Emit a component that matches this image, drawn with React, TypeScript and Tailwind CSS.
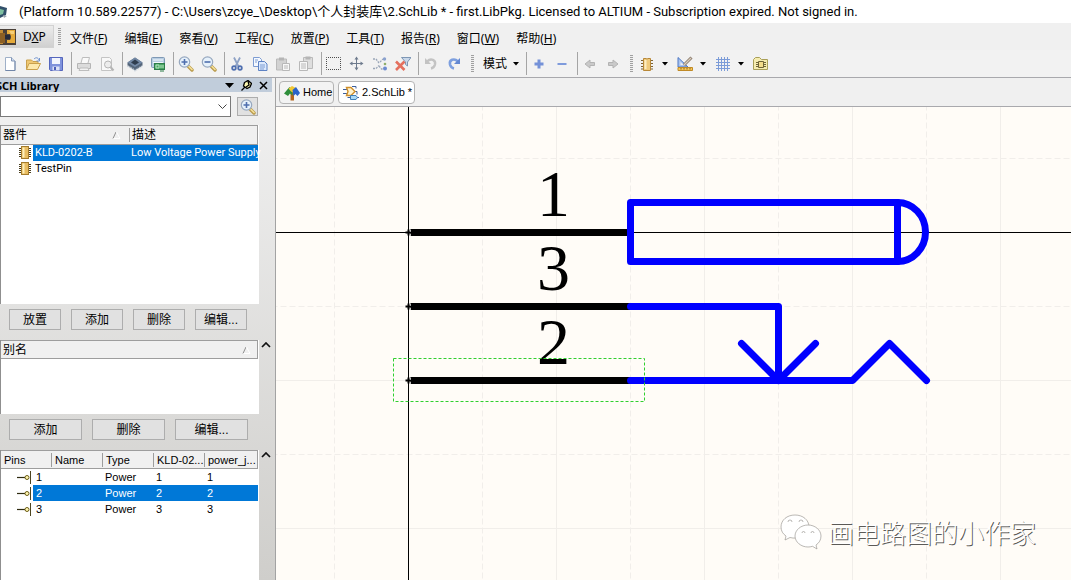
import type { ReactNode } from "react";

const UI_FONT = "font-['Noto_Sans','Noto_Sans_CJK_SC',sans-serif]";
const LIST_FONT = "font-['Liberation_Sans','Noto_Sans_CJK_SC',sans-serif]";
const NARROW_FONT = "font-['Roboto','Noto_Sans_CJK_SC',sans-serif]";

const MENUS = [
  ["文件", "F"],
  ["编辑", "E"],
  ["察看", "V"],
  ["工程", "C"],
  ["放置", "P"],
  ["工具", "T"],
  ["报告", "R"],
  ["窗口", "W"],
  ["帮助", "H"],
];

const PINS = ["1", "2", "3"];

function Icon({ children }: { children: ReactNode }) {
  return (
    <svg viewBox="0 0 16 16" className="h-4 w-4 shrink-0" fill="none" aria-hidden="true">
      {children}
    </svg>
  );
}

function Caret() {
  return (
    <svg viewBox="0 0 6 4" className="h-1 w-1.5 shrink-0" aria-hidden="true">
      <path d="M0 0h6L3 3.5z" fill="#000" />
    </svg>
  );
}

function Tool({ label, children }: { label: string; children: ReactNode }) {
  return (
    <button type="button" aria-label={label} className="flex h-6 w-[23px] shrink-0 items-center pl-0.5">
      <Icon>{children}</Icon>
    </button>
  );
}

function DropTool({ label, children }: { label: string; children: ReactNode }) {
  return (
    <button type="button" aria-label={label} className="flex h-6 w-[38px] shrink-0 items-center gap-[7px] pl-0.5">
      <Icon>{children}</Icon>
      <Caret />
    </button>
  );
}

function Separator() {
  return (
    <span className="flex h-[23px] w-[5px] shrink-0 justify-center">
      <span className="w-px bg-[#a5a5a5]" />
    </span>
  );
}

function Grip() {
  return (
    <span className="flex w-[11px] shrink-0 justify-center">
      <span className="h-[17px] w-[3px] bg-[repeating-linear-gradient(#a0a0a0_0_1px,#f0f0f0_1px_2px)]" />
    </span>
  );
}

function Lens({ plus }: { plus: boolean }) {
  return (
    <>
      <path d="M10.500 10.500l3.500 3.500" stroke="#b99a4c" strokeWidth="3.400" strokeLinecap="round" />
      <path d="M11 10.500l3 3" stroke="#f6e29a" strokeWidth="1.600" strokeLinecap="round" />
      <circle cx="6.5" cy="6" r="5.2" fill="#e6f1fb" stroke="#97a8bf" strokeWidth="1.2" />
      <path d={plus ? "M3.5 6h6M6.5 3v6" : "M3.5 6h6"} stroke="#4f6fae" strokeWidth="1.6" />
    </>
  );
}

function Chip() {
  return (
    <svg viewBox="0 0 12 14" className="h-[14px] w-3 shrink-0" aria-hidden="true">
      <path d="M0 2.5h12M0 4.5h12M0 6.5h12M0 8.5h12M0 10.5h12" stroke="#4b3f20" />
      <rect x="2.500" y=".5" width="7" height="12" fill="#e9bd62" stroke="#a57c2c" />
      <path d="M4.500 1.500v10" stroke="#fdeebb" strokeWidth="2" />
    </svg>
  );
}

function PinMark() {
  return (
    <svg viewBox="0 0 15 14" className="h-[14px] w-[15px] shrink-0" fill="none" aria-hidden="true">
      <path d="M1 7.5h8" stroke="#2f2b10" strokeWidth="1.2" />
      <circle cx="11" cy="7.5" r="2" fill="#fff6b0" stroke="#6b5c17" />
      <path d="M14.5 1v13" stroke="#4d4520" />
    </svg>
  );
}

function SortMark() {
  return (
    <svg viewBox="0 0 9 8" className="h-2 w-[9px] shrink-0" fill="none" aria-hidden="true">
      <path d="M1 7.5L4 1" stroke="#8f8f8f" />
      <path d="M4.5 1L8 7.5H1.5" stroke="#fff" />
    </svg>
  );
}

function Chevron() {
  return (
    <svg viewBox="0 0 10 6" className="h-1.5 w-2.5 shrink-0" fill="none" aria-hidden="true">
      <path d="M1 5l4-4 4 4" stroke="#111" strokeWidth="1.7" />
    </svg>
  );
}

function PanelButton({ children, wide = false }: { children: ReactNode; wide?: boolean }) {
  return (
    <button
      type="button"
      className={`h-[21px] shrink-0 border border-[#adadad] bg-[#e1e1e1] text-xs leading-none text-black ${wide ? "w-[73px]" : "w-[52px]"}`}
    >
      {children}
    </button>
  );
}

function MenuBar() {
  return (
    <nav className="flex h-[27px] items-center bg-[#f0f0f0]">
      <button
        type="button"
        className="flex h-[23px] w-[54px] shrink-0 items-center gap-[7px] border border-l-0 border-[#d2d2d2] bg-gradient-to-b from-[#ececec] to-[#d0d0d0] text-xs"
      >
        <svg viewBox="0 0 16 16" className="h-4 w-4" aria-hidden="true">
          <rect width="16" height="16" fill="#4a4038" />
          <path d="M0 1h3v14H0z" fill="#c08a35" />
          <path d="M0 4h5v3h2v3H5v4H0z" fill="#8b5f24" />
          <path d="M7 1h8v13H7v-3h3q2-3 0-6H7z" fill="#e5aa3a" />
          <path d="M9 2h5v3h-3z" fill="#f6cf78" />
          <path d="M5 6h5v4H5z" fill="#262a3a" />
        </svg>
        <span>
          D<u>X</u>P
        </span>
      </button>
      <Grip />
      <ul className="flex items-center gap-[17px] pl-[5px]">
        {MENUS.map(([name, key]) => (
          <li key={key}>
            <button type="button" className="whitespace-nowrap text-xs">
              {name}(<u>{key}</u>)
            </button>
          </li>
        ))}
      </ul>
    </nav>
  );
}

function Toolbar() {
  return (
    <div role="toolbar" className="flex h-[28px] items-center border-b border-[#a9a9ad] bg-[#f2f2f2]">
      <Tool label="New">
        <path d="M3.5 1.500h6l3.500 3.500v9.500H3.500z" fill="#fff" stroke="#9fb0c8" />
        <path d="M13 5v9.500H3.500" stroke="#7186a8" />
        <path d="M9.5 1.500v3.500H13" stroke="#8497b5" fill="#cfdcf0" />
      </Tool>
      <Tool label="Open">
        <path d="M1.500 13.500v-9.500h5l1.500 1.500h5V8" fill="#efc873" stroke="#c9a04c" />
        <path d="M1.500 13.500L4 7.500h11.500l-3 6z" fill="#fde9ad" stroke="#c9a04c" />
        <path d="M9 3c2-2 4-1.500 5 1M14.500 2v3h-3" stroke="#6f92cf" />
      </Tool>
      <Tool label="Save">
        <path d="M1.500 1.500h13v13h-12l-1-1z" fill="#7f93dc" stroke="#5566bd" />
        <path d="M4 2h8v6H4z" fill="#f2f5fd" />
        <path d="M4.500 10.500h7v4h-7z" fill="#dce2f6" />
        <path d="M6 11h2v3H6z" fill="#4a5cb5" />
      </Tool>
      <Separator />
      <Tool label="Print">
        <path d="M5 7l1.500-5.500h7L12 7" fill="#fafafa" stroke="#bdbdbd" />
        <path d="M1.500 7.500h13v5h-13z" fill="#dcdcdc" stroke="#b5b5b5" />
        <path d="M4 12h8l1 2.500H3z" fill="#f3f3f3" stroke="#bdbdbd" />
      </Tool>
      <Tool label="Print preview">
        <path d="M2.500 1.500h8l2 2v11h-10z" fill="#f8f8f8" stroke="#c4c4c4" />
        <circle cx="9" cy="8.500" r="3.500" fill="#ececec" stroke="#b5b5b5" />
        <path d="M11.500 11l3 3.500" stroke="#b5b5b5" strokeWidth="2" />
      </Tool>
      <Separator />
      <Tool label="Components">
        <path d="M.500 6.500L8 1.500l7.500 5v3L8 14.500l-7.500-5z" fill="#54657a" />
        <path d="M.500 6.500L8 1.500l7.500 5L8 11z" fill="#7389a6" />
        <path d="M4 6.500L8 3.500l4 3L8 9z" fill="#2f3d4f" />
        <path d="M.500 10L8 14.500l7.500-4.500" stroke="#c7d0da" strokeWidth="1.800" strokeDasharray="1 1" />
      </Tool>
      <Tool label="Board">
        <rect x="1.500" y="1.500" width="13" height="10" rx="1" fill="#b8cde2" stroke="#7f99b5" />
        <path d="M3 4h10M3 6.500h10" stroke="#f3f8fc" />
        <rect x="4.500" y="7.500" width="10" height="6" fill="#4aa565" stroke="#2c7c49" />
        <path d="M6 9h3v3H6zM11 9v3M13 9v3" stroke="#b5e6bf" />
        <path d="M10 15h4" stroke="#2c7c49" />
      </Tool>
      <Separator />
      <Tool label="Zoom in">
        <Lens plus />
      </Tool>
      <Tool label="Zoom out">
        <Lens plus={false} />
      </Tool>
      <Separator />
      <Tool label="Cut">
        <path d="M5 1.500l4.500 9M11 1.500L6.500 10.500" stroke="#8fa3c6" strokeWidth="1.800" />
        <circle cx="5" cy="12" r="1.800" stroke="#4f6fb0" strokeWidth="1.800" />
        <circle cx="11" cy="12" r="1.800" stroke="#4f6fb0" strokeWidth="1.800" />
      </Tool>
      <Tool label="Copy">
        <path d="M1.500 1.500h6l2 2v7h-8z" fill="#f5f9ff" stroke="#7d9cd2" />
        <path d="M6.500 5.500h6l2.500 2.500v6.500H6.500z" fill="#dce9fd" stroke="#5d82c4" />
        <path d="M8 9h5M8 11h5M8 13h4M3 4h3M3 6h2" stroke="#7d9cd2" />
      </Tool>
      <Tool label="Paste">
        <path d="M1.500 3h10v11h-10z" fill="#d2d2d2" stroke="#bababa" />
        <path d="M4 1.500h5v3H4z" fill="#b5b5b5" />
        <path d="M7.500 7.500h7v7h-7zM9 10h4M9 12h4" fill="#f7f7f7" stroke="#b8b8b8" />
      </Tool>
      <Tool label="Paste special">
        <path d="M5.500 1.500h9v11h-9z" fill="#dedede" stroke="#bababa" />
        <path d="M7.500 .500h5v3h-5z" fill="#b5b5b5" />
        <path d="M1.500 5.500h8v9h-8zM3 8h5M3 10h5M3 12h5" fill="#f7f7f7" stroke="#b8b8b8" />
      </Tool>
      <Separator />
      <Tool label="Select area">
        <rect x=".5" y="1.500" width="14" height="12" stroke="#4c4c4c" strokeDasharray="1 1" strokeDashoffset=".5" />
      </Tool>
      <Tool label="Move">
        <path d="M7.500 2v11M2 7.500h11" stroke="#6e7b8d" />
        <path d="M7.500 .500l2 3h-4zM7.500 14.500l2-3h-4zM.500 7.500l3-2v4zM14.500 7.500l-3-2v4z" fill="#6e7b8d" />
      </Tool>
      <Tool label="Deselect">
        <path d="M1 3h3l3 4M1 12.500h3l3-3M7 10l2.500 3h2M8 6l3-3" stroke="#9aa6b8" strokeWidth="1.300" strokeDasharray="2 1" />
        <circle cx="12.500" cy="3" r="1.700" fill="#8ba2cf" />
        <circle cx="13" cy="8" r="1.300" fill="#8fae6b" />
        <circle cx="13" cy="12.500" r="2" fill="#6c8bd0" />
      </Tool>
      <Tool label="Clear filter">
        <path d="M6.500 1.500H16L12.500 6v4l-2-1.500V6z" fill="#c9d8ea" stroke="#7e97b5" />
        <path d="M1 5.500l8.500 8.500M9.500 5.500L1 14" stroke="#e4705f" strokeWidth="2.600" />
      </Tool>
      <Separator />
      <Tool label="Undo">
        <path d="M4 5.500c4-4 9-1.500 8 3-.500 2-2 3.500-4 4" stroke="#c3c3c3" strokeWidth="2.400" />
        <path d="M2 2v6h6z" fill="#c3c3c3" />
      </Tool>
      <Tool label="Redo">
        <path d="M12 5.500c-4-4-9-1.500-8 3 .500 2 2 3.500 4 4" stroke="#7d9fdf" strokeWidth="2.600" />
        <path d="M14 2v6H8z" fill="#6388d2" />
      </Tool>
      <Grip />
      <button type="button" className="flex w-[46px] shrink-0 items-center justify-center gap-1.5 whitespace-nowrap text-xs">
        模式
        <Caret />
      </button>
      <Separator />
      <Tool label="Add">
        <path d="M8 3.500v9M3.500 8h9" stroke="#7491d8" strokeWidth="3" />
      </Tool>
      <Tool label="Remove">
        <path d="M3.500 8h9" stroke="#7f9bdc" strokeWidth="2" />
      </Tool>
      <Separator />
      <Tool label="Previous">
        <path d="M3 8l5-4v2.500h4.500v3H8V12z" fill="#c9c9c9" stroke="#b3b3b3" />
      </Tool>
      <Tool label="Next">
        <path d="M13 8L8 4v2.500H3.500v3H8V12z" fill="#c9c9c9" stroke="#b3b3b3" />
      </Tool>
      <Grip />
      <DropTool label="Place component">
        <path d="M2 4.500h12M2 7.500h12M2 10.500h12M2 13h12" stroke="#7d6434" />
        <path d="M4.500 2.500h2.500q1 1.200 2 0h2.500v12h-7z" fill="#f0cb7d" stroke="#b88838" />
        <path d="M6.500 4v9" stroke="#fdedc2" strokeWidth="2" />
      </DropTool>
      <DropTool label="Drawing tools">
        <path d="M1 1.500v9.500h10z" fill="#a9c4f0" stroke="#4c77c4" />
        <path d="M3.500 6v3h3z" fill="#f0f0f0" />
        <path d="M7 9l7.500-7.500" stroke="#8a7a6a" strokeWidth="3" />
        <path d="M7 9l7-7" stroke="#d9cdbd" strokeWidth="1.200" />
        <path d="M1 11.500h14.500v3H1z" fill="#f5c657" stroke="#c08a27" />
        <path d="M4 12v1.500M7 12v1.500M10 12v1.500M13 12v1.500" stroke="#8b621a" />
      </DropTool>
      <DropTool label="Grid">
        <path d="M1 3.500h14M1 6.500h14M1 9.500h14M1 12.500h14M3.500 1v14M6.500 1v14M9.500 1v14M12.500 1v14" stroke="#7c9cd8" />
      </DropTool>
      <button type="button" aria-label="Library" className="flex w-[23px] shrink-0 items-center pl-0.5">
        <Icon>
          <path d="M.500 13.500v-10l2-2h4l2 2h6v10z" fill="#f5ecb0" stroke="#a99f58" />
          <path d="M3 6.500h10M3 8.500h10M3 10.500h10" stroke="#6f6436" />
          <path d="M5.500 5.500h5v6h-5z" fill="#f3dc8a" stroke="#6f6436" />
        </Icon>
      </button>
    </div>
  );
}

function LibraryPanel() {
  return (
    <aside className={`flex w-[276px] shrink-0 flex-col border-r border-[#a3a3a3] bg-gradient-to-b from-[#f2f2f2] to-[#cfcecb] ${LIST_FONT}`}>
      <header className="mr-[3px] flex h-[14px] items-center gap-[7px] overflow-hidden bg-[#c1cddb] pr-1">
        <h2 className={`-ml-1 flex-1 text-[11px] font-bold leading-none ${UI_FONT}`}>SCH Library</h2>
        <svg viewBox="0 0 9 5" className="h-[5px] w-[9px]" aria-hidden="true">
          <path d="M0 0h9L4.500 5z" />
        </svg>
        <svg viewBox="0 0 11 11" className="h-[11px] w-[11px]" aria-hidden="true">
          <path d="M3.500 2.500L7 .500l3.500 3L9 7 6 8.500 2.500 6z" fill="#fbf7b0" stroke="#000" strokeWidth="1.300" />
          <path d="M.500 10.500L4 7M7 1l1 4-3 2" fill="none" stroke="#000" strokeWidth="1.300" />
        </svg>
        <svg viewBox="0 0 9 9" className="h-[9px] w-[9px]" aria-hidden="true">
          <path d="M1 1l7 7M8 1L1 8" stroke="#000" strokeWidth="1.500" />
        </svg>
      </header>

      <div className="mt-1 flex h-[21px] items-center gap-1.5">
        <div className="relative h-[21px] w-[231px]">
          <select aria-label="Filter" className="block h-full w-full appearance-none border border-[#7a7a7a] bg-white text-xs">
            <option value="" />
          </select>
          <svg viewBox="0 0 9 6" className="pointer-events-none absolute top-2 right-1 h-1.5 w-[9px]" fill="none" aria-hidden="true">
            <path d="M.500 .500l4 4 4-4" stroke="#444" />
          </svg>
        </div>
        <button type="button" aria-label="Find" className="flex h-[19px] w-[21px] items-center justify-center border border-[#adadad] bg-[#e1e1e1]">
          <Icon>
            <Lens plus />
          </Icon>
        </button>
      </div>

      <div className="mt-2 h-[179px] w-[259px] border-l border-[#8f8f8f] bg-white pr-px">
        <table className={`w-full table-fixed text-left text-[11px] leading-4 ${NARROW_FONT}`}>
          <colgroup>
            <col className="w-[128px]" />
            <col />
          </colgroup>
          <thead>
            <tr className="h-[19px] border border-l-0 border-[#9d9d9d] bg-[#f0f0f0]">
              <th className="p-0 pl-0.5 text-xs font-normal">
                <span className="flex items-center justify-between pr-2">
                  器件
                  <SortMark />
                </span>
              </th>
              <th className="p-0 text-xs font-normal">
                <span className="block border-l border-[#9d9d9d] pl-0.5 leading-[14px]">描述</span>
              </th>
            </tr>
          </thead>
          <tbody>
            <tr className="h-4 text-white">
              <td className="p-0">
                <span className="flex h-4 items-center gap-0.5 pl-[18px] text-white">
                  <Chip />
                  <span className="flex-1 bg-[#0078d7] pl-0.5">KLD-0202-B</span>
                </span>
              </td>
              <td className="bg-[#0078d7] p-0 pl-0.5 whitespace-nowrap">Low Voltage Power Supply</td>
            </tr>
            <tr className="h-4">
              <td className="p-0">
                <span className="flex h-4 items-center gap-1 pl-[18px]">
                  <Chip />
                  TestPin
                </span>
              </td>
              <td className="p-0" />
            </tr>
          </tbody>
        </table>
      </div>

      <div className="mt-[5px] flex gap-2.5 pl-[9px]">
        <PanelButton>放置</PanelButton>
        <PanelButton>添加</PanelButton>
        <PanelButton>删除</PanelButton>
        <PanelButton>编辑...</PanelButton>
      </div>

      <div className="mt-2.5 flex h-[74px] items-start gap-0.5">
        <div className="h-full w-[259px] border-l border-[#8f8f8f] bg-white pr-px">
          <div className="flex h-[19px] items-center justify-between border border-l-0 border-[#9d9d9d] bg-[#f0f0f0] pr-1.5 pl-0.5 text-xs">
            别名
            <SortMark />
          </div>
        </div>
        <button type="button" aria-label="Collapse aliases" className="pt-0.5">
          <Chevron />
        </button>
      </div>

      <div className="mt-[5px] flex gap-2.5 pl-[9px]">
        <PanelButton wide>添加</PanelButton>
        <PanelButton wide>删除</PanelButton>
        <PanelButton wide>编辑...</PanelButton>
      </div>

      <div className="mt-2.5 flex flex-1 items-stretch gap-0.5">
        <div className="w-[259px] border-l border-[#8f8f8f] bg-white pr-px">
          <table className="w-full table-fixed text-left text-[11px] leading-4">
            <colgroup>
              <col className="w-[50px]" />
              <col className="w-[51px]" />
              <col className="w-[51px]" />
              <col className="w-[51px]" />
              <col />
            </colgroup>
            <thead>
              <tr className="h-[18px] border border-l-0 border-[#9d9d9d] bg-[#f0f0f0]">
                {["Pins", "Name", "Type", "KLD-02...", "power_j..."].map((name, i) => (
                  <th key={name} className="p-0 font-normal whitespace-nowrap">
                    <span className={`block pl-[3px] leading-[14px] ${i ? "border-l border-[#9d9d9d]" : ""}`}>{name}</span>
                  </th>
                ))}
              </tr>
            </thead>
            <tbody>
              {PINS.map((pin) => {
                const cell = pin === "2" ? "bg-[#0078d7] p-0 pl-[3px] text-white" : "p-0 pl-[3px]";
                return (
                  <tr key={pin} className="h-4">
                    <td className="p-0">
                      <span className="flex h-4 items-center gap-0.5 pl-[15px]">
                        <PinMark />
                        <span className={`flex-1 ${cell}`}>{pin}</span>
                      </span>
                    </td>
                    <td className={cell} />
                    <td className={cell}>Power</td>
                    <td className={cell}>{pin}</td>
                    <td className={cell}>{pin}</td>
                  </tr>
                );
              })}
            </tbody>
          </table>
        </div>
        <button type="button" aria-label="Collapse pins" className="flex items-start pt-0.5">
          <Chevron />
        </button>
      </div>
    </aside>
  );
}

function Tabs() {
  return (
    <div className={`flex h-[29px] items-start gap-1 border-b border-[#a9a9ad] bg-[#f0f0f0] pt-[3px] pl-[3px] text-[11px] ${LIST_FONT}`}>
      <button type="button" className="flex h-[23px] w-[55px] items-center gap-[3px] rounded-sm border border-[#b4b4b4] bg-[#f3f3f3] pl-1">
        <Icon>
          <path d="M6.500 7h3.500v8.500H6.500z" fill="#b5651d" />
          <path d="M0 8.500L5.500 2l3 3v5.500L6 8.500l-2 2.500z" fill="#2f8f3c" />
          <path d="M4.500 3.500L8 1l4 2-3 4.500-2-1z" fill="#f0c733" />
          <path d="M8.500 5L12 2l4 6-2.500 3-2-2-2 2z" fill="#2a62c9" />
        </Icon>
        Home
      </button>
      <button type="button" className="flex h-[23px] w-[77px] items-center gap-[3px] rounded-sm border border-[#b4b4b4] bg-white pl-1 whitespace-nowrap">
        <Icon>
          <path d="M0 4.500h4M0 8.500h4M12 6.500h2v3" stroke="#3c5f9c" />
          <path d="M3.500 2.500h4.500l4 4-4 4H3.500l1.500-4z" fill="#fff3cf" stroke="#cf8f2a" strokeWidth="1.400" />
          <path d="M7.500 10.500h5.500l1.500 2-1.500 2H7.500z" fill="#a9d8f5" stroke="#3f7fb8" />
          <path d="M4.500 12.500h3M14.500 12.500H16M9 1.500h4v2" stroke="#3c5f9c" />
        </Icon>
        2.SchLib *
      </button>
    </div>
  );
}

const GRID_STEPS = [-1, 1, 2, 3, 4, 5, 6, 7, 8, 9, 10, 11, 12, 13, 14, 15, 16, 17, 18, 19, 20];

function Schematic() {
  return (
    <main className="relative min-h-[473px] flex-1 overflow-hidden bg-[#fffcf7]">
      <svg className="absolute inset-0 h-full w-full" fill="none" aria-label="KLD-0202-B symbol">
        {/* everything is relative to the sheet origin, one grid step is 74px */}
        <g transform="translate(132.5 125.5)">
          {GRID_STEPS.map((n) => (
            <g key={n} stroke="#f1eeea" strokeDasharray={n % 2 ? "6 3" : undefined}>
              <path d={`M${n * 74} -200V3000`} />
              <path d={`M-200 ${n * 74}H4000`} />
            </g>
          ))}
          <path d="M0 -200V3000M-200 0H4000" stroke="#000" />

          <g stroke="#000" strokeWidth="7">
            <path d="M2 0H222M2 74H222M2 148H222" />
          </g>
          {[0, 74, 148].map((y) => (
            <g key={y}>
              <path d={`M-3 ${y}h6M0 ${y - 3}v6`} stroke="#000" strokeWidth="2" />
              <path d={`M2 ${y - 2}v1M2 ${y + 2}v1`} stroke="#fff" />
            </g>
          ))}

          <g stroke="#0000ff" strokeWidth="7" strokeLinecap="round" strokeLinejoin="round">
            <path d="M222 -30H489V29H222z" />
            <path d="M489 -30a28 29.500 0 0 1 0 59" />
            <path d="M222 74H370V148" />
            <path d="M333 111L370 148L407 111" />
            <path d="M222 148H444L481 111L518 148" />
          </g>

          <g className="font-['Liberation_Serif',serif] text-[66px]" fill="#000" textAnchor="middle">
            <text x="145" y="-17">1</text>
            <text x="145" y="57">3</text>
            <text x="145" y="131">2</text>
          </g>

          <rect x="-15" y="126" width="251" height="43" stroke="#2fd02f" strokeDasharray="3 2" />
        </g>
      </svg>

      <div className="absolute right-[35px] bottom-[30px] flex items-center gap-1.5">
        <svg viewBox="0 0 42 36" className="h-9 w-[42px]" fill="#fff" stroke="#8d8a85" strokeWidth=".6" aria-hidden="true">
          <path d="M15 1C7 1 1 6 1 13c0 4 2 7 5 9l-1 4 5-2.500c2 .5 4 .8 6 .5C22 23 29 20 29 13 29 6 23 1 15 1z" />
          <path d="M28 11c-7 0-13 5-13 11s6 11 13 11c1.500 0 3-.2 4.500-.7L37 35l-1-4c3-2 5-5 5-9 0-6-6-11-13-11z" />
          <path d="M8 8a2 2 0 0 1 4 0M19 8a2 2 0 0 1 4 0M22 19a1.500 1.500 0 0 1 3 0M31 19a1.500 1.500 0 0 1 3 0" />
        </svg>
        <span className="font-['Noto_Sans_CJK_SC',sans-serif] text-[26px] leading-9 font-light text-white [text-shadow:1px_1px_0_#5c5a57]">
          画电路图的小作家
        </span>
      </div>
    </main>
  );
}

export default function App() {
  return (
    <div className={`flex min-h-screen flex-col overflow-hidden bg-[#f0f0f0] text-black ${UI_FONT}`}>
      <div className="flex h-[23px] items-center gap-[11px] bg-white text-[13px] whitespace-nowrap">
        <svg viewBox="0 0 8 14" className="h-[14px] w-2 shrink-0" aria-hidden="true">
          <path d="M0 1l7 2-1 7-6 3z" fill="#31506a" />
          <path d="M0 4l4 1-1 4-3 1z" fill="#7ec0a0" />
          <path d="M3 10l4 1-3 2z" fill="#9aa4ad" />
        </svg>
        <h1 className={NARROW_FONT}>
          (Platform 10.589.22577) - C:\Users\zcye_\Desktop\个人封装库\2.SchLib * - first.LibPkg. Licensed to ALTIUM - Subscription
          expired. Not signed in.
        </h1>
      </div>
      <MenuBar />
      <Toolbar />
      <div className="flex flex-1">
        <LibraryPanel />
        <div className="flex min-w-0 flex-1 flex-col">
          <Tabs />
          <Schematic />
        </div>
      </div>
    </div>
  );
}
